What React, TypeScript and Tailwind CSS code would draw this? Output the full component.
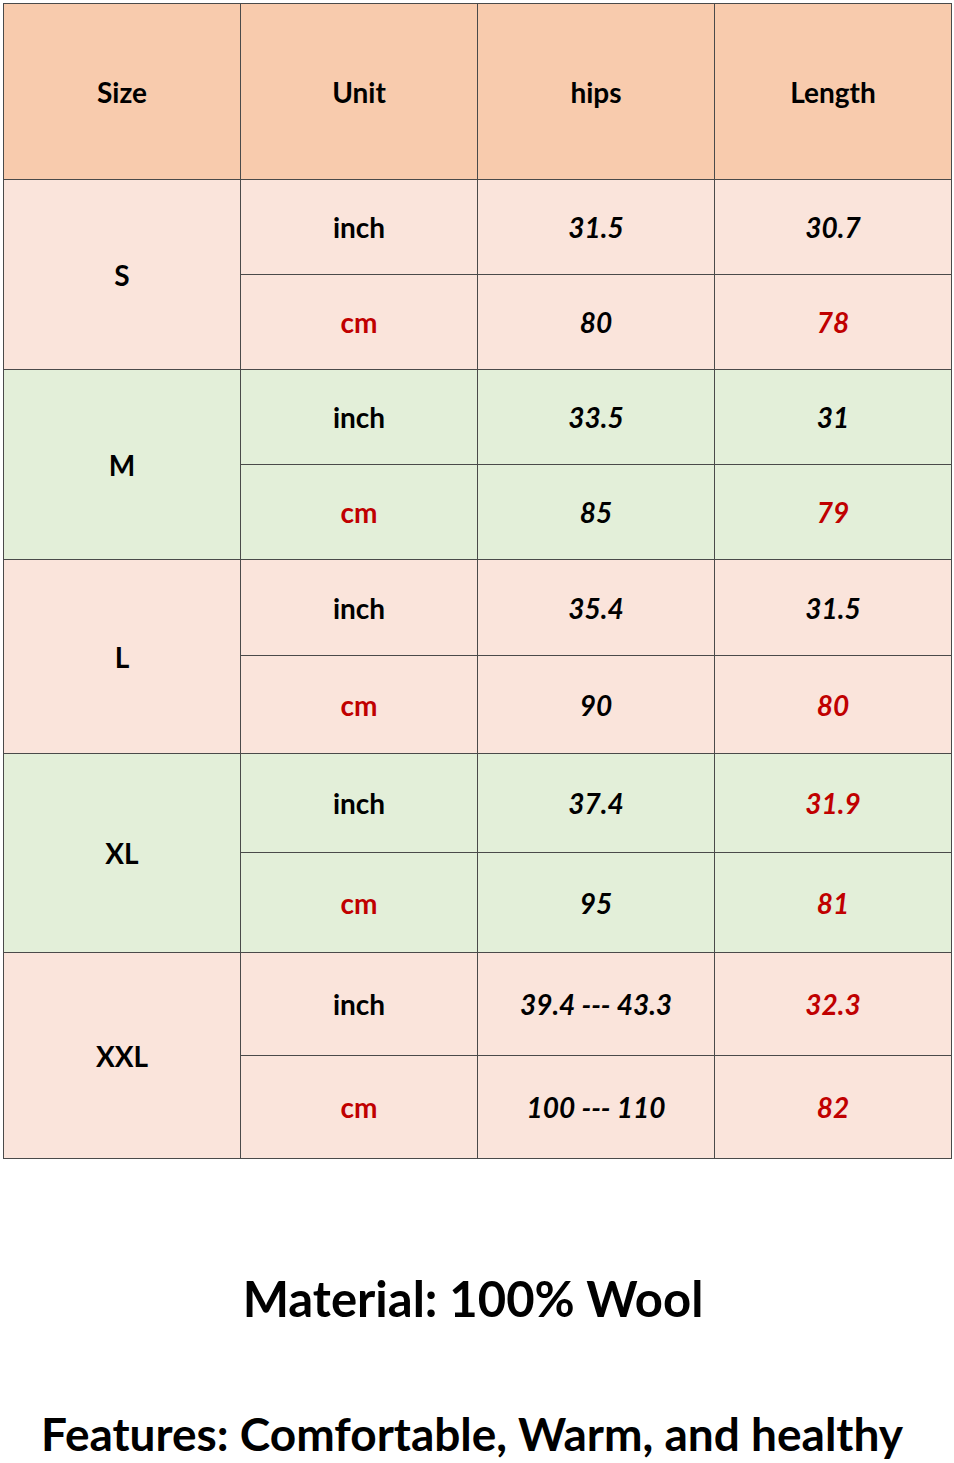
const RED = "text-[#c00000]";

type Row = {
  size: string;
  bg: string;
  h: [number, number];
  inch: [string, string];
  cm: [string, string];
  inchRed?: boolean;
  cmRed?: boolean;
};

const rows: Row[] = [
  { size: "S", bg: "bg-[#fae4db]", h: [95, 95], inch: ["31.5", "30.7"], cm: ["80", "78"], cmRed: true },
  { size: "M", bg: "bg-[#e3efd9]", h: [95, 95], inch: ["33.5", "31"], cm: ["85", "79"], cmRed: true },
  { size: "L", bg: "bg-[#fae4db]", h: [96, 98], inch: ["35.4", "31.5"], cm: ["90", "80"], cmRed: true },
  { size: "XL", bg: "bg-[#e3efd9]", h: [99, 100], inch: ["37.4", "31.9"], cm: ["95", "81"], inchRed: true, cmRed: true },
  { size: "XXL", bg: "bg-[#fae4db]", h: [103, 103], inch: ["39.4 --- 43.3", "32.3"], cm: ["100 --- 110", "82"], inchRed: true, cmRed: true },
];

const cell = "border border-[#4a4a4a] text-center align-middle p-0";

export default function App() {
  return (
    <div className="w-[954px] h-[1463px] bg-white text-black" style={{ fontFamily: "Lato, 'Open Sans', sans-serif" }}>
      <div className="pt-[3px] pl-[3px]">
        <table className="w-[948px] border-collapse table-fixed text-[28px] font-bold">
          <thead>
            <tr className="h-[176px] bg-[#f8cbad]">
              <th className={`${cell} w-[237px] font-bold`}>Size</th>
              <th className={`${cell} w-[237px] font-bold`}>Unit</th>
              <th className={`${cell} w-[237px] font-bold`}>hips</th>
              <th className={`${cell} w-[237px] font-bold`}>Length</th>
            </tr>
          </thead>
          <tbody>
            {rows.map((r) => (
              <>
                <tr key={r.size + "i"} className={r.bg} style={{ height: r.h[0] }}>
                  <td rowSpan={2} className={cell}>{r.size}</td>
                  <td className={cell}>inch</td>
                  <td className={`${cell} italic`}>{r.inch[0]}</td>
                  <td className={`${cell} italic ${r.inchRed ? RED : ""}`}>{r.inch[1]}</td>
                </tr>
                <tr key={r.size + "c"} className={r.bg} style={{ height: r.h[1] }}>
                  <td className={`${cell} ${RED}`}>cm</td>
                  <td className={`${cell} italic`}>{r.cm[0]}</td>
                  <td className={`${cell} italic ${r.cmRed ? RED : ""}`}>{r.cm[1]}</td>
                </tr>
              </>
            ))}
          </tbody>
        </table>
      </div>
      <div className="mt-[106px] text-center text-[49px] font-bold leading-[66px] pr-[8px]">Material: 100% Wool</div>
      <div className="mt-[72px] text-center text-[46px] font-bold leading-[62px] pr-[10px]">Features: Comfortable, Warm, and healthy</div>
    </div>
  );
}
